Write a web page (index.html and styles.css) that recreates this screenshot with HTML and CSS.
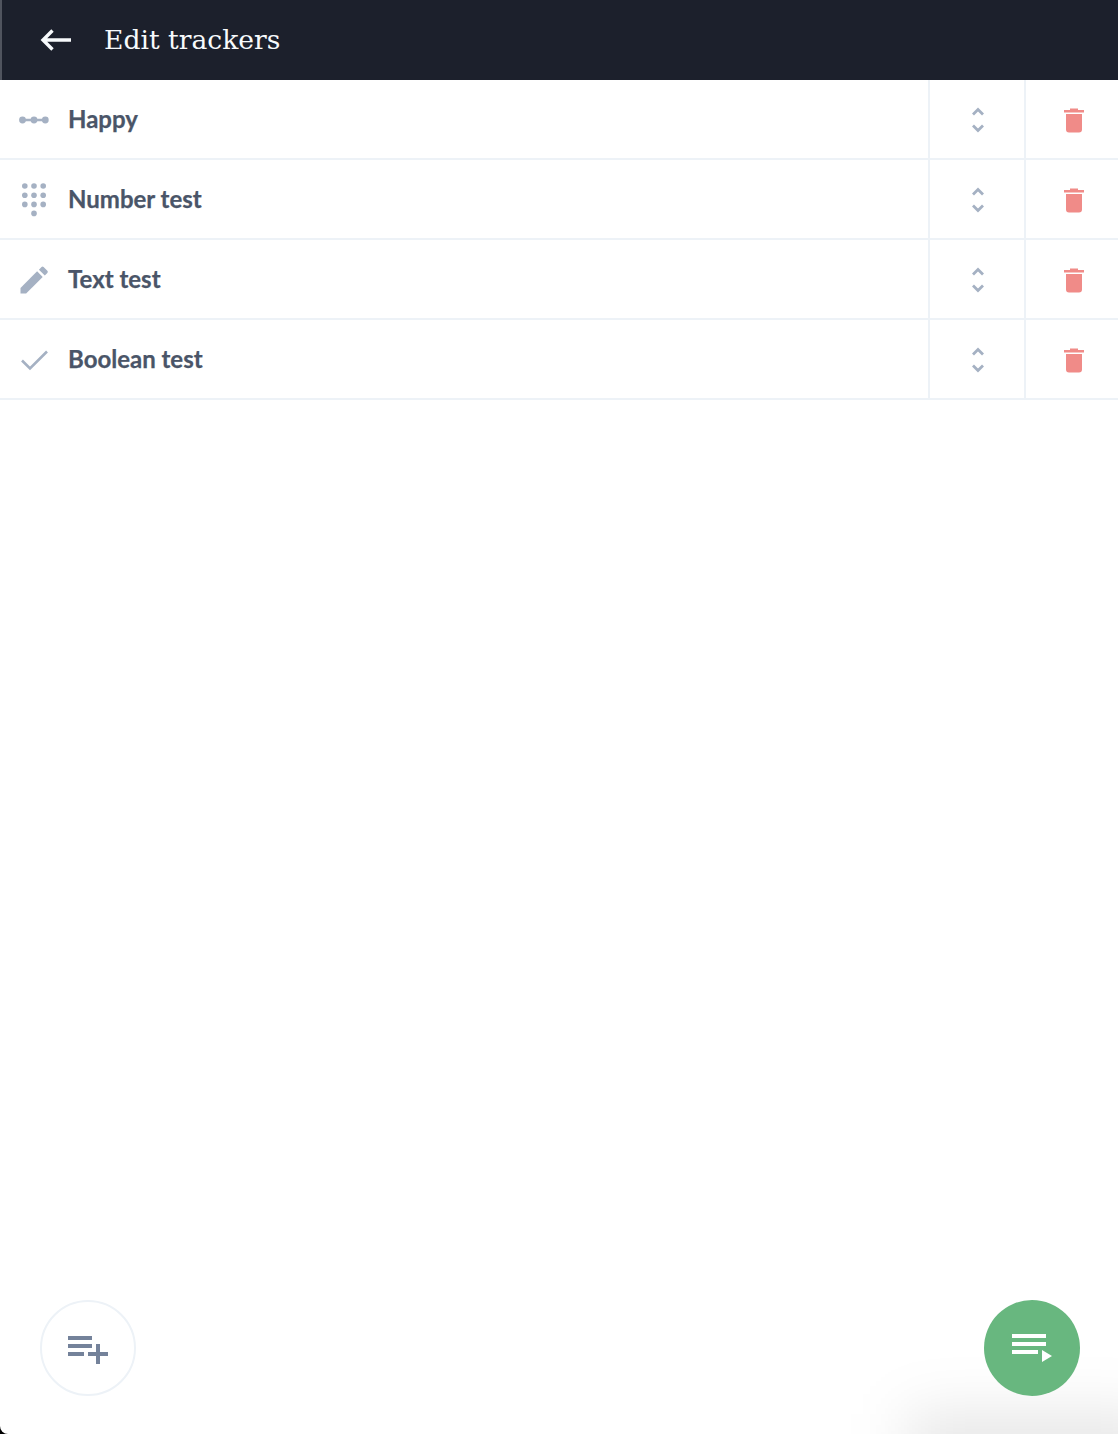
FILE: index.html
```html
<!doctype html>
<html>

<head>
    <meta charset="utf-8">
    <title>Edit trackers</title>
    <link rel="stylesheet" href="styles.css">
</head>

<body>
    <div class="page">
        <header class="topbar">
            <svg class="back" width="32" height="24" viewBox="0 0 32 24">
                <path d="M31 12H3.500M12.500 2.500L3 12l9.500 9.500" fill="none" stroke="#f7fafc" stroke-width="3.400" />
            </svg>
            <h1 class="title">Edit trackers</h1>
        </header>

        <ul class="trackers">
            <li class="row">
                <span class="kind">
                    <svg width="32" height="32" viewBox="0 0 32 32" fill="#a5b1c3">
                        <circle cx="4.500" cy="16" r="3.400" />
                        <circle cx="16" cy="16" r="3.400" />
                        <circle cx="27.300" cy="16" r="3.400" />
                        <rect x="5" y="14.750" width="22" height="2.500" />
                    </svg>
                </span>
                <span class="name">Happy</span>
                <span class="cell">
                    <svg width="14" height="26" viewBox="0 0 14 26" fill="none" stroke="#a5b1c3" stroke-width="2.800">
                        <path d="M2 7.500L7 2.500l5 5M2 18.500L7 23.500l5-5" />
                    </svg>
                </span>
                <span class="cell trash-cell">
                    <svg width="20" height="25" viewBox="0 0 20 25" fill="#f08b88">
                        <path d="M6 .500h8V2h6v2.500H0V2h6zM2 6h16v15.500a3 3 0 0 1-3 3H5a3 3 0 0 1-3-3z" />
                    </svg>
                </span>
            </li>
            <li class="row">
                <span class="kind">
                    <svg width="32" height="36" viewBox="0 0 32 36" fill="#a5b1c3">
                        <circle cx="6.800" cy="4" r="2.800" />
                        <circle cx="16" cy="4" r="2.800" />
                        <circle cx="25.200" cy="4" r="2.800" />
                        <circle cx="6.800" cy="13.200" r="2.800" />
                        <circle cx="16" cy="13.200" r="2.800" />
                        <circle cx="25.200" cy="13.200" r="2.800" />
                        <circle cx="6.800" cy="22.400" r="2.800" />
                        <circle cx="16" cy="22.400" r="2.800" />
                        <circle cx="25.200" cy="22.400" r="2.800" />
                        <circle cx="16" cy="31.400" r="2.800" />
                    </svg>
                </span>
                <span class="name">Number test</span>
                <span class="cell">
                    <svg width="14" height="26" viewBox="0 0 14 26" fill="none" stroke="#a5b1c3" stroke-width="2.800">
                        <path d="M2 7.500L7 2.500l5 5M2 18.500L7 23.500l5-5" />
                    </svg>
                </span>
                <span class="cell trash-cell">
                    <svg width="20" height="25" viewBox="0 0 20 25" fill="#f08b88">
                        <path d="M6 .500h8V2h6v2.500H0V2h6zM2 6h16v15.500a3 3 0 0 1-3 3H5a3 3 0 0 1-3-3z" />
                    </svg>
                </span>
            </li>
            <li class="row">
                <span class="kind">
                    <svg width="36" height="36" viewBox="0 0 24 24" fill="#a5b1c3">
                        <path d="M3 17.250V21h3.750L17.810 9.940l-3.750-3.750L3 17.250z" />
                        <path d="M20.900 7.300a1 1 0 0 0 0-1.400l-2.500-2.500a1 1 0 0 0-1.400 0l-1.700 1.700 3.900 3.900 1.700-1.700z" />
                    </svg>
                </span>
                <span class="name">Text test</span>
                <span class="cell">
                    <svg width="14" height="26" viewBox="0 0 14 26" fill="none" stroke="#a5b1c3" stroke-width="2.800">
                        <path d="M2 7.500L7 2.500l5 5M2 18.500L7 23.500l5-5" />
                    </svg>
                </span>
                <span class="cell trash-cell">
                    <svg width="20" height="25" viewBox="0 0 20 25" fill="#f08b88">
                        <path d="M6 .500h8V2h6v2.500H0V2h6zM2 6h16v15.500a3 3 0 0 1-3 3H5a3 3 0 0 1-3-3z" />
                    </svg>
                </span>
            </li>
            <li class="row">
                <span class="kind">
                    <svg width="32" height="32" viewBox="0 0 32 32" fill="none" stroke="#a5b1c3" stroke-width="2.600">
                        <path d="M4 16.500l8 8L29 7.500" />
                    </svg>
                </span>
                <span class="name">Boolean test</span>
                <span class="cell">
                    <svg width="14" height="26" viewBox="0 0 14 26" fill="none" stroke="#a5b1c3" stroke-width="2.800">
                        <path d="M2 7.500L7 2.500l5 5M2 18.500L7 23.500l5-5" />
                    </svg>
                </span>
                <span class="cell trash-cell">
                    <svg width="20" height="25" viewBox="0 0 20 25" fill="#f08b88">
                        <path d="M6 .500h8V2h6v2.500H0V2h6zM2 6h16v15.500a3 3 0 0 1-3 3H5a3 3 0 0 1-3-3z" />
                    </svg>
                </span>
            </li>
        </ul>

        <footer class="actions">
            <button class="fab fab-add">
                <svg width="40" height="28" viewBox="0 0 40 28" fill="#74829a">
                    <path d="M0 0h24v4H0zM0 8h24v4H0zM0 16h16v4H0zM20 16h8v-8h4v8h8v4h-8v8h-4v-8h-8z" />
                </svg>
            </button>
            <button class="fab fab-start">
                <svg width="40" height="28" viewBox="0 0 40 28" fill="#fff">
                    <path d="M0 0h34v4H0zM0 8h34v4H0zM0 16h26v4H0zM30 16l10 6-10 6z" />
                </svg>
            </button>
        </footer>
    </div>
</body>

</html>
```
FILE: styles.css
```css
html,
body {
    height: 100%;
    background: #000;
}

* {
    margin: 0;
    padding: 0;
    box-sizing: border-box;
}

.page {
    height: 100%;
    display: flex;
    flex-direction: column;
    position: relative;
    overflow: hidden;
    background: #fff;
    border-radius: 0 0 0 8px;
}

.page:after {
    content: "";
    position: absolute;
    right: -40px;
    bottom: -50px;
    width: 250px;
    height: 70px;
    background: rgba(0, 0, 0, 0.1);
    filter: blur(30px);
}

.topbar {
    height: 80px;
    flex: none;
    display: flex;
    align-items: center;
    padding-left: 38px;
    background: #1c202c;
    border-left: 2px solid #50545e;
}

.back {
    margin-right: 32px;
}

.title {
    margin-bottom: 2px;
    font-family: "DejaVu Serif", serif;
    font-size: 26.600px;
    font-weight: normal;
    color: #f7fafc;
}

.trackers {
    list-style: none;
    flex: 1;
}

.row {
    height: 80px;
    display: flex;
    align-items: stretch;
    border-bottom: 2px solid #edf2f7;
}

.kind {
    width: 68px;
    flex: none;
    display: flex;
    align-items: center;
    justify-content: center;
    padding-top: 2px;
}

.name {
    flex: 1;
    align-self: center;
    margin-bottom: 2px;
    font-family: Lato, sans-serif;
    font-size: 24px;
    font-weight: bold;
    color: #4a5568;
    -webkit-text-stroke: 0.25px #4a5568;
}

.cell {
    width: 96px;
    flex: none;
    display: flex;
    align-items: center;
    justify-content: center;
    padding: 2px 0 0 2px;
    border-left: 2px solid #edf2f7;
}

.trash-cell {
    width: 94px;
    padding-left: 4px;
}

.actions {
    position: absolute;
    left: 40px;
    right: 38px;
    bottom: 38px;
    display: flex;
    justify-content: space-between;
    z-index: 1;
}

.fab {
    width: 96px;
    height: 96px;
    border-radius: 50%;
    display: flex;
    align-items: center;
    justify-content: center;
    background: #fff;
    border: 2px solid #edf2f7;
}

.fab-add svg {
    margin-top: 4px;
}

.fab-start {
    background: #68b77f;
    border: none;
}
```
